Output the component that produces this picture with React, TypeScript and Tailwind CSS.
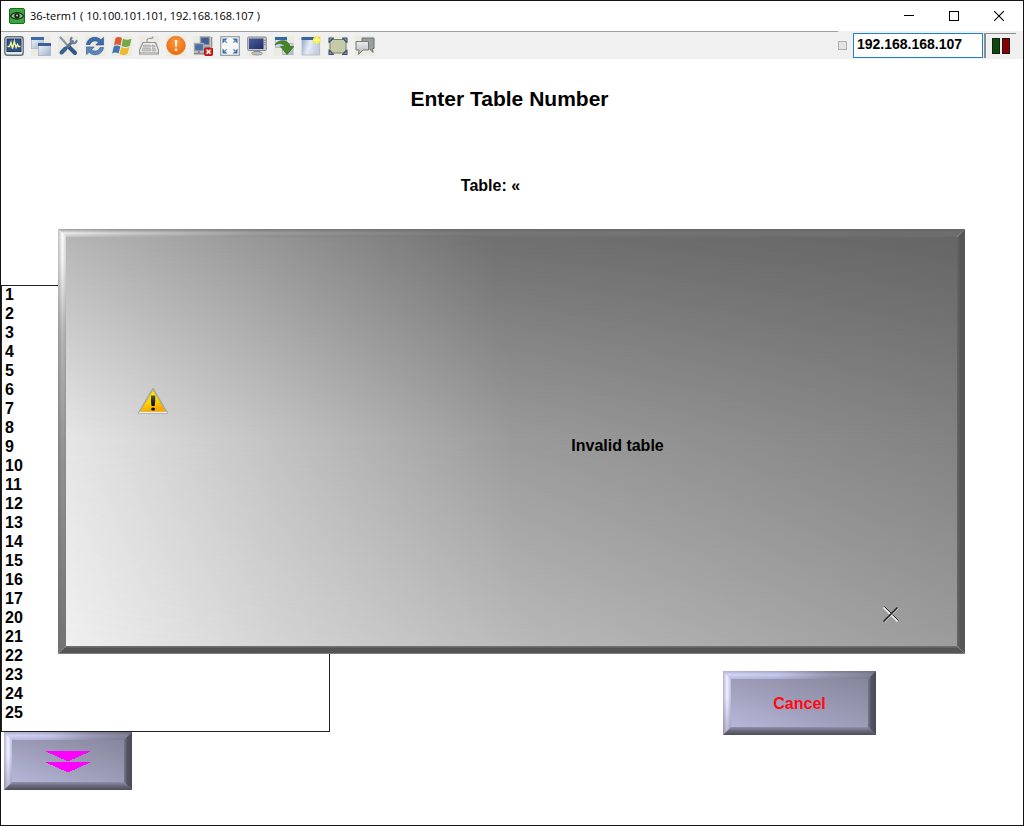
import React from "react";

const TABLES = [1, 2, 3, 4, 5, 6, 7, 8, 9, 10, 11, 12, 13, 14, 15, 16, 17, 20, 21, 22, 23, 24, 25];

function Icon({ children }: { children: React.ReactNode }) {
  return (
    <svg viewBox="0 0 20 20" className="block size-5 bg-[#ecebe2]" aria-hidden="true">
      {children}
    </svg>
  );
}

function Defs() {
  return (
    <svg className="absolute size-0" aria-hidden="true">
      <defs>
        <linearGradient id="pane" x1="0" y1="0" x2="1" y2="1">
          <stop offset="0" stopColor="#f4f7fb" />
          <stop offset="1" stopColor="#9fb0cc" />
        </linearGradient>
        <linearGradient id="paneH" x1="0" y1="0" x2="1" y2="0.3">
          <stop offset="0" stopColor="#8ea6cb" />
          <stop offset="0.5" stopColor="#e6ecf4" />
          <stop offset="1" stopColor="#c3cede" />
        </linearGradient>
        <linearGradient id="screen" x1="0" y1="0" x2="1" y2="1">
          <stop offset="0" stopColor="#4c5f9c" />
          <stop offset="1" stopColor="#1f2c66" />
        </linearGradient>
        <linearGradient id="bubble" x1="0" y1="0" x2="0" y2="1">
          <stop offset="0" stopColor="#eceded" />
          <stop offset="1" stopColor="#aeb0b2" />
        </linearGradient>
        <radialGradient id="orange" cx="0.5" cy="0.35" r="0.65">
          <stop offset="0" stopColor="#ff9a3c" />
          <stop offset="1" stopColor="#ee6a0c" />
        </radialGradient>
        <linearGradient id="gold" x1="0" y1="0" x2="0.3" y2="1">
          <stop offset="0" stopColor="#fff600" />
          <stop offset="0.6" stopColor="#fbd800" />
          <stop offset="1" stopColor="#f9a800" />
        </linearGradient>
        <linearGradient id="mark" x1="0" y1="0" x2="0" y2="1">
          <stop offset="0" stopColor="#555" />
          <stop offset="1" stopColor="#000" />
        </linearGradient>
      </defs>
    </svg>
  );
}

const TOOLS: { label: string; art: React.ReactNode }[] = [
  {
    label: "Monitor activity",
    art: (
      <>
        <rect x="0.8" y="0.8" width="18.4" height="18.4" rx="2.5" fill="#e4e6e8" stroke="#66717d" strokeWidth="1.4" />
        <rect x="3" y="3" width="14" height="12.5" fill="#2c5484" stroke="#1d3c66" />
        <path d="M3.5 10.5h2l1.5-4 1.5 6 1.8-7 1.8 6 1.4-3 1 2h2" fill="none" stroke="#f3ef9a" strokeWidth="1.5" />
      </>
    ),
  },
  {
    label: "Windows",
    art: (
      <>
        <rect x="0.5" y="1.5" width="12" height="11" fill="url(#pane)" stroke="#b9c2d0" />
        <rect x="0" y="1" width="13" height="3" fill="#4169a8" />
        <rect x="7.5" y="7.5" width="12" height="12" fill="url(#pane)" stroke="#b0bac9" />
        <rect x="7" y="7" width="13" height="3" fill="#385f9f" />
      </>
    ),
  },
  {
    label: "Configure",
    art: (
      <>
        <path d="M2.500 1.500 11 11" stroke="#8d99a8" strokeWidth="2.200" strokeLinecap="round" />
        <path d="m11.500 11.500 5.500 5.500" stroke="#2f558c" strokeWidth="4" strokeLinecap="round" />
        <path d="M14.500 5.500 4 16.500" stroke="#60748f" strokeWidth="3" strokeLinecap="round" />
        <path d="m3.500 16.500 4-4" stroke="#35608f" strokeWidth="4" strokeLinecap="round" />
        <path d="M13.500 2c-1.500 2-1 4.500 1 5 2 .8 3.500-.5 4-2" fill="none" stroke="#6d819b" strokeWidth="2.200" strokeLinecap="round" />
      </>
    ),
  },
  {
    label: "Refresh",
    art: (
      <>
        <path d="M1.500 8.500C2 3.800 6 1.200 10 1.300c2.500 0 4.500 1 5.800 2.500L18.500 1.500V9h-7.700l2.600-2.700C11 4 6.500 4.500 5 8.500z" fill="#3d6dab" stroke="#254e88" strokeWidth="0.6" />
        <path d="M18.500 11.500c-.5 4.700-4.500 7.300-8.500 7.200-2.500 0-4.500-1-5.800-2.500L1.500 18.500V11h7.700l-2.600 2.700c2.400 2.300 6.900 1.800 8.400-2.200z" fill="#5b87bf" stroke="#2b548e" strokeWidth="0.6" />
      </>
    ),
  },
  {
    label: "Start menu",
    art: (
      <>
        <path d="M3.500 2c2-1.300 4.500-1.300 6.500 0L8.500 9.500c-2-1.200-4.500-1.200-6.500 0z" fill="#dc5836" />
        <path d="M11 2.800c2.500 1.200 5.500 1.200 8.500 0L17.700 10c-2.500 1.200-5.500 1.200-8.200 0z" fill="#74a948" />
        <path d="M1.800 10.500c2-1.200 4.500-1.200 6.500 0l-1.700 7c-2-1.200-4.500-1.200-6.500 0z" fill="#3b72b8" />
        <path d="M9.200 11c2.500 1.200 5.500 1.200 8.200 0l-1.900 7c-2.500 1.500-5.500 1.500-8 0z" fill="#efb936" />
      </>
    ),
  },
  {
    label: "Send keys",
    art: (
      <>
        <path d="M8 7V4c0-1.500 1-1.500 3-1.500s3-.5 3-2" fill="none" stroke="#9a9a9a" strokeWidth="1.200" />
        <path d="M4 6.500h12.500L19.500 14v4H.5v-4z" fill="#efefed" stroke="#929292" strokeWidth="1.200" strokeLinejoin="round" />
        <path d="M4.500 9h7v2.200H4zM3.500 12.500h8v2.500H3zM13 9h2.500l.6 2.200H13zM13 12.500h3.500l.5 2.500h-4z" fill="#c4c4c2" stroke="#a2a2a0" strokeWidth="0.600" />
        <path d="M1 16.500h18" stroke="#bbb" />
      </>
    ),
  },
  {
    label: "Alert",
    art: (
      <>
        <circle cx="10" cy="9.500" r="9.300" fill="url(#orange)" stroke="#d96c20" strokeWidth="0.6" />
        <path d="M8.800 4h2.500l-.5 7H9.300z" fill="#fff" />
        <circle cx="10.050" cy="13.700" r="1.300" fill="#fff" />
      </>
    ),
  },
  {
    label: "Disconnect",
    art: (
      <>
        <rect x="7.500" y="1" width="9" height="8" fill="#425d91" stroke="#9a9da2" strokeWidth="1.400" />
        <path d="M18.500 1v10M8 11h9" stroke="#8d9094" strokeWidth="1.500" />
        <rect x="1.500" y="7.500" width="9" height="7.500" fill="#4a6fa8" stroke="#a5a7aa" strokeWidth="1.400" />
        <path d="M1 17.500h10M6 15v2" stroke="#858890" strokeWidth="1.800" />
        <rect x="11.500" y="12" width="8" height="7.500" rx="1" fill="#d51f1f" stroke="#a91717" />
        <path d="m13.500 13.800 4 4m0-4-4 4" stroke="#fff" strokeWidth="1.600" />
      </>
    ),
  },
  {
    label: "Full screen",
    art: (
      <>
        <rect x="0.700" y="0.700" width="18.600" height="18.600" fill="#f7f8f8" stroke="#969b9f" strokeWidth="1.200" />
        <path d="M2.500 2.500h5l-5 5zM17.500 2.500v5l-5-5zM2.500 17.500v-5l5 5zM17.500 17.500h-5l5-5z" fill="#356ca8" />
        <path d="m4 4 4 4m8-4-4 4M4 16l4-4m8 4-4-4" stroke="#6590be" strokeWidth="1.200" strokeDasharray="4 2" />
      </>
    ),
  },
  {
    label: "Display",
    art: (
      <>
        <rect x="0.700" y="1" width="18.600" height="13.500" rx="1" fill="#c5c7ca" stroke="#888b91" />
        <rect x="2" y="2.500" width="14.500" height="10.500" fill="url(#screen)" />
        <path d="M17.800 4v6" stroke="#777" strokeDasharray="1 1" />
        <path d="M7 15h6v2H7z" fill="#888" />
        <ellipse cx="10" cy="17.300" rx="5.500" ry="1.700" fill="#c5c5c4" stroke="#858585" strokeWidth="0.800" />
      </>
    ),
  },
  {
    label: "Transfer window",
    art: (
      <>
        <rect x="1.500" y="1.500" width="11" height="10" fill="url(#pane)" stroke="#b3bac4" />
        <path d="M1 2.500h12" stroke="#3667a3" strokeWidth="3" />
        <rect x="8.500" y="7.500" width="10.500" height="11" fill="url(#pane)" stroke="#b3bac4" />
        <path d="M1 9C3 4 14 2 16.200 10.500h3.600L13 18.500l-6.500-8h4.300C9 7 5 6.500 1 9z" fill="#468629" stroke="#31671b" strokeWidth="0.700" />
      </>
    ),
  },
  {
    label: "New window",
    art: (
      <>
        <rect x="1" y="1.500" width="17.500" height="17.500" fill="url(#paneH)" stroke="#aeb9c8" strokeWidth="0.800" />
        <path d="M0.500 2.500h18" stroke="#37669f" strokeWidth="3" />
        <circle cx="15.700" cy="4" r="3.800" fill="#f7e92c" />
        <path d="M15.700 1v6m-3-3h6" stroke="#fffcad" strokeWidth="1.300" />
      </>
    ),
  },
  {
    label: "Select region",
    art: (
      <>
        <path d="M4 3.500h12l2 3v7l-2 3.500H4L2 13.500v-7z" fill="#c6cba7" stroke="#777d72" />
        <path d="M1 2h4.500L1 6.500zM19 2h-4.500L19 6.500zM1 18.500h4.500L1 14zM19 18.500h-4.500L19 14z" fill="#7f92b3" stroke="#465671" strokeWidth="1.100" strokeLinejoin="round" />
      </>
    ),
  },
  {
    label: "Chat",
    art: (
      <>
        <path d="M7 2h12v10.500h-1.500l.5 4-4-4H7z" fill="#9b9d9f" stroke="#6f7275" strokeLinejoin="round" />
        <path d="M1 5.500h12.500V14H8l-4.500 4.500.5-4.500H1z" fill="url(#bubble)" stroke="#75787a" strokeLinejoin="round" />
      </>
    ),
  },
];

function SlateBevel() {
  return (
    <span aria-hidden="true" className="pointer-events-none">
      <span className="absolute inset-x-0 top-0 h-2 bg-[linear-gradient(90deg,#d2d2fa_0%,#c4c4ea_35%,#9292ae_70%,#77778c_100%)] [clip-path:polygon(0_0,100%_0,calc(100%-8px)_100%,8px_100%)]" />
      <span className="absolute inset-x-0 top-0 h-2 bg-[linear-gradient(180deg,#50506044_0%,#ffffff11_45%,#77779944_100%)] [clip-path:polygon(0_0,100%_0,calc(100%-8px)_100%,8px_100%)]" />
      <span className="absolute inset-y-0 left-0 w-2 bg-[linear-gradient(90deg,#b0b0d4_0%,#f2f2ff_50%,#bcbce0_100%)] [clip-path:polygon(0_0,100%_8px,100%_calc(100%-8px),0_100%)]" />
      <span className="absolute inset-y-0 left-0 w-2 bg-[linear-gradient(180deg,#ffffff00_40%,#66668066_100%)] [clip-path:polygon(0_0,100%_8px,100%_calc(100%-8px),0_100%)]" />
      <span className="absolute inset-y-0 right-0 w-2 bg-[linear-gradient(90deg,#77778b_0%,#505060_45%,#4b4b58_100%)] [clip-path:polygon(0_8px,100%_0,100%_100%,0_calc(100%-8px))]" />
      <span className="absolute inset-x-0 bottom-0 h-2 bg-[linear-gradient(180deg,#9090ac_0%,#66667a_50%,#4d4d5a_100%)] [clip-path:polygon(8px_0,calc(100%-8px)_0,100%_100%,0_100%)]" />
    </span>
  );
}

function SlateButton({ label, className, children }: { label: string; className: string; children: React.ReactNode }) {
  return (
    <button
      type="button"
      aria-label={label}
      className={`relative flex items-center justify-center bg-[linear-gradient(20deg,#bcbce0_0%,#9c9cb8_50%,#808094_100%)] pt-[2px] ${className}`}
    >
      <SlateBevel />
      {children}
    </button>
  );
}

function PanelSurface() {
  return (
    <div aria-hidden="true" className="pointer-events-none absolute inset-0">
      <div className="absolute inset-2 bg-[linear-gradient(90deg,#b6b6b6_0%,#979797_22%,#707070_48%,#666_100%)]" />
      <div className="absolute inset-2 bg-[linear-gradient(90deg,#e6e6e6_0%,#c2c2c2_24%,#9b9b9b_50%,#838383_100%)] [mask-image:linear-gradient(180deg,transparent_0%,black_50%)]" />
      <div className="absolute inset-2 bg-[linear-gradient(90deg,#efefef_0%,#d3d3d3_24%,#b8b8b8_52%,#9c9c9c_100%)] [mask-image:linear-gradient(180deg,transparent_50%,black_100%)]" />
      <div className="absolute inset-x-0 top-0 h-2 bg-[linear-gradient(90deg,#eee_0%,#ccc_7%,#999_22%,#707070_45%,#646464_100%)] [clip-path:polygon(0_0,100%_0,calc(100%-8px)_100%,8px_100%)]" />
      <div className="absolute inset-x-0 top-0 h-2 bg-[linear-gradient(180deg,#66666699_0%,#ffffff11_50%,#77777755_100%)] [clip-path:polygon(0_0,100%_0,calc(100%-8px)_100%,8px_100%)]" />
      <div className="absolute inset-y-0 left-0 w-2 bg-[linear-gradient(180deg,#fff_0%,#f4f4f4_8%,#b5b5b5_24%,#909090_50%,#686868_100%)] [clip-path:polygon(0_0,100%_8px,100%_calc(100%-8px),0_100%)]" />
      <div className="absolute inset-y-0 left-0 w-2 bg-[linear-gradient(90deg,#77777777_0%,#ffffff11_55%,#88888855_100%)] [clip-path:polygon(0_0,100%_8px,100%_calc(100%-8px),0_100%)]" />
      <div className="absolute inset-y-0 right-0 w-2 bg-[linear-gradient(90deg,#666_0%,#545454_50%,#585858_100%)] [clip-path:polygon(0_8px,100%_0,100%_100%,0_calc(100%-8px))]" />
      <div className="absolute inset-x-0 bottom-0 h-2 bg-[linear-gradient(180deg,#777_0%,#555_30%,#555_85%,#999_100%)] [clip-path:polygon(8px_0,calc(100%-8px)_0,100%_100%,0_100%)]" />
    </div>
  );
}

function TitleBar() {
  const control = "flex h-full w-[45px] items-center justify-center";
  return (
    <header className="flex h-[30px] items-center bg-white pr-[2px]">
      <svg viewBox="0 0 16 16" className="ml-2 size-4" aria-hidden="true">
        <rect x="0.500" y="0.500" width="15" height="15" rx="1.500" fill="#38a83c" stroke="#176b22" />
        <path d="M1.500 8C4 3.500 12 3.500 14.500 8 12 12 4 12 1.500 8z" fill="#9bb59b" stroke="#153518" strokeWidth="1.300" />
        <circle cx="8" cy="7.800" r="2.700" fill="#162418" />
        <circle cx="8" cy="7.500" r="0.900" fill="#cfe0cf" />
      </svg>
      <h1 className="ml-[5px] flex-1 whitespace-pre font-['Open_Sans','Noto_Sans',sans-serif] text-[11px] leading-4 text-black">
        36-term1 ( 10.100.101.101, 192.168.168.107 )
      </h1>
      <button type="button" aria-label="Minimize" className={control}>
        <svg viewBox="0 0 10 10" className="size-[10px]" shapeRendering="crispEdges"><path d="M0 4.500h10" stroke="#000" /></svg>
      </button>
      <button type="button" aria-label="Maximize" className={control}>
        <svg viewBox="0 0 10 10" className="size-[10px]" shapeRendering="crispEdges"><rect x="0.500" y="0.500" width="9" height="9" fill="none" stroke="#000" /></svg>
      </button>
      <button type="button" aria-label="Close" className={control}>
        <svg viewBox="0 0 10 10" className="size-[10px]"><path d="m0 0 10 10M10 0 0 10" stroke="#000" strokeWidth="1.100" /></svg>
      </button>
    </header>
  );
}

function Toolbar() {
  return (
    <div className="flex h-7 bg-[#f0f0f0]">
      <div className="flex flex-1 items-center gap-[7px] border-t border-[#a0a0a0] pl-[3px]">
        {TOOLS.map((tool) => (
          <button key={tool.label} type="button" aria-label={tool.label}>
            <Icon>{tool.art}</Icon>
          </button>
        ))}
      </div>
      <div className="flex items-start pt-[2px] pr-[7px]">
        <input type="checkbox" aria-label="Lock address" className="mt-2 mr-[6px] size-[9px] appearance-none border border-[#b0b0b0] bg-[#e3e3e3]" />
        <input
          aria-label="Address"
          defaultValue="192.168.168.107"
          className="h-[25px] w-[130px] border border-[#1a80d9] bg-white px-[3px] pb-[4px] font-['Liberation_Sans',Arial,sans-serif] text-[14px] font-bold text-black outline-none"
        />
        <div className="ml-[1px] flex h-[25px] w-8 items-center justify-center gap-[2px] border-t border-l-2 border-[#8c8c8c] bg-[#f0f0f0]">
          <span className="h-4 w-2 border border-[#1b1b1b] bg-[#0a4a0a]" />
          <span className="h-4 w-2 border border-[#1b1b1b] bg-[#8b0000]" />
        </div>
      </div>
    </div>
  );
}

export default function App() {
  return (
    <div className="flex min-h-screen flex-col border border-[#141414] bg-white font-['Liberation_Sans',Arial,sans-serif] text-black">
      <Defs />
      <TitleBar />
      <Toolbar />
      <main className="relative flex-1">
        <h2 className="pt-[28px] pr-[5px] text-center text-[21px] leading-6 font-bold">Enter Table Number</h2>
        <p className="pt-[65px] pr-[43px] text-center text-[16px] leading-5 font-bold">Table: «</p>
        <div className="mt-[89px] flex items-end justify-between">
          <div className="w-[329px]">
            <ul className="h-[447px] pl-1 text-[16px] leading-[19px] font-bold ring-1 ring-[#222] ring-inset">
              {TABLES.map((n) => (
                <li key={n}>{n}</li>
              ))}
            </ul>
            <SlateButton label="Scroll down" className="ml-[3px] h-[58px] w-32">
              <svg viewBox="0 0 46 22" className="h-[22px] w-[46px]" shapeRendering="crispEdges" aria-hidden="true">
                <path d="M0 0h46L23 10.500zM0 11h46L23 21.500z" fill="#f0f" />
              </svg>
            </SlateButton>
          </div>
          <SlateButton label="Cancel" className="mr-[147px] mb-[55px] h-16 w-[153px] text-[16px] font-bold text-[#ff0a10]">
            Cancel
          </SlateButton>
        </div>

        <section role="alertdialog" aria-label="Invalid table" className="absolute top-[170px] right-[58px] left-[57px] h-[425px]">
          <PanelSurface />
          <div className="relative flex h-full items-start">
            <svg viewBox="0 0 32 28" className="mt-[158px] ml-[79px] h-7 w-8" aria-hidden="true">
              <path d="M16 1.500 30.500 26H1.500z" fill="#d2d2d2" stroke="#a5a5a5" strokeWidth="1.400" strokeLinejoin="round" />
              <path d="M2 25.500h28" stroke="#eee" strokeWidth="1.200" />
              <path d="M16 3.500 28.500 24.300h-25z" fill="url(#gold)" stroke="#dba500" strokeWidth="0.600" />
              <path d="M14 8.500h4.200v6l-.6 4.500h-3l-.6-4.500z" fill="url(#mark)" />
              <ellipse cx="16.100" cy="22" rx="2" ry="1.600" fill="#111" />
            </svg>
            <p className="mt-[207px] flex-1 pl-[184px] text-center text-[16px] leading-5 font-bold">Invalid table</p>
            <button type="button" aria-label="Dismiss" className="mt-[376px] mr-[65px] size-[18px] self-start">
              <svg viewBox="0 0 18 18" className="size-[18px]">
                <path d="m1.500 2.500 14 14" stroke="#f3f3f3" strokeWidth="1.500" />
                <path d="m2.500 1.500 14 14" stroke="#333" strokeWidth="1" />
                <path d="m2.500 17 14-14" stroke="#eee" strokeWidth="1" />
                <path d="m1.500 16.500 14-14" stroke="#222" strokeWidth="1.600" />
              </svg>
            </button>
          </div>
        </section>
      </main>
    </div>
  );
}
